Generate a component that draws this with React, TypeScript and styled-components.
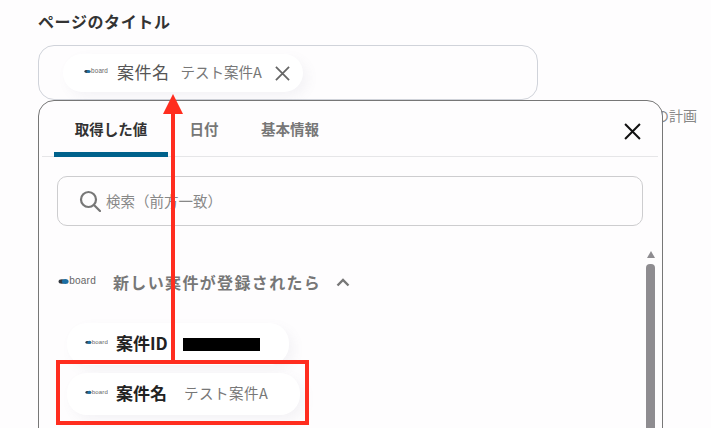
import React from "react";
import styled, { createGlobalStyle } from "styled-components";

const GlobalStyle = createGlobalStyle`
  html, body {
    margin: 0;
    padding: 0;
    background: #fefdfe;
    overflow: hidden;
  }
`;

const Page = styled.div`
  position: relative;
  width: 711px;
  height: 428px;
  overflow: hidden;
  padding: 11px 0 0 38px;
  box-sizing: border-box;
  font-family: "Noto Sans CJK JP", "Noto Sans", sans-serif;
  background: #fefdfe;
`;

const Heading = styled.div`
  font-size: 16px;
  line-height: 20px;
  font-weight: 700;
  color: #333;
  letter-spacing: 0.6px;
  margin-bottom: 14px;
`;

const Field = styled.div`
  width: 500px;
  height: 55px;
  box-sizing: border-box;
  border: 1px solid #d0d3da;
  border-radius: 16px;
  padding: 8px 0 0 24px;
`;

const Pill = styled.div<{ $width: number; $height: number }>`
  display: flex;
  align-items: center;
  width: ${(p) => p.$width}px;
  height: ${(p) => p.$height}px;
  box-sizing: border-box;
  border-radius: 20px;
  background: #fff;
  box-shadow: 5px 5px 12px rgba(120, 110, 140, 0.07);
`;

const FieldPill = styled(Pill)`
  padding: 0 0 3px 21px;
`;

const ListPill = styled(Pill)`
  padding: 0 0 4px 18px;
`;

const LogoWrap = styled.span<{ $width: number }>`
  display: inline-flex;
  align-items: center;
  flex: none;
  width: ${(p) => p.$width}px;
`;

const ChipName = styled.span`
  font-size: 17px;
  color: #555;
  margin-left: 9px;
  letter-spacing: 0.5px;
`;

const ChipValue = styled.span`
  font-size: 14.5px;
  color: #777;
  margin-left: 11px;
`;

const Remove = styled.span`
  display: inline-flex;
  margin: 3px 0 0 13px;
  color: #666;
`;

const Panel = styled.div`
  position: relative;
  z-index: 1;
  width: 625px;
  height: 360px;
  box-sizing: border-box;
  border: 1px solid #777;
  border-radius: 16px;
  background: #fefdfe;
`;

const TabBar = styled.div`
  display: flex;
  align-items: flex-end;
  height: 55px;
  margin: 0 4px 0 3px;
  padding-left: 12px;
  border-bottom: 1px solid #e6e6e8;
`;

const Tab = styled.div<{ $active?: boolean; $width: number }>`
  width: ${(p) => p.$width}px;
  height: 100%;
  box-sizing: border-box;
  display: flex;
  align-items: center;
  justify-content: center;
  font-size: 14.5px;
  font-weight: 700;
  color: ${(p) => (p.$active ? "#333" : "#777")};
  border-bottom: ${(p) => (p.$active ? "5px solid #00628c" : "5px solid transparent")};
  border-radius: 6px 6px 0 0;
  margin-bottom: -1px;
  padding-top: 3px;
`;

const TabSpacer = styled.div`
  flex: 1;
`;

const CloseButton = styled.span`
  display: inline-flex;
  align-self: center;
  margin: 5px 17px 0 0;
  color: #111;
`;

const Body = styled.div`
  display: flex;
  flex-direction: column;
  padding: 19px 7px 0 18px;
`;

const SearchBox = styled.div`
  display: flex;
  align-items: center;
  width: 586px;
  height: 50px;
  box-sizing: border-box;
  border: 1px solid #cdcdcf;
  border-radius: 10px;
  padding-left: 21px;
  color: #777;
`;

const SearchText = styled.span`
  font-size: 14.5px;
  color: #888;
  margin: -2px 0 0 5px;
`;

const ContentRow = styled.div`
  display: flex;
  justify-content: space-between;
  margin-top: 25px;
`;

const Tree = styled.div`
  display: flex;
  flex-direction: column;
  padding-top: 15px;
`;

const SectionHead = styled.div`
  display: flex;
  align-items: center;
  height: 32px;
  padding-left: 1px;
`;

const SectionTitle = styled.span`
  font-size: 16px;
  font-weight: 700;
  color: #777;
  letter-spacing: 1.35px;
  margin-left: 17px;
`;

const Chevron = styled.span`
  display: inline-flex;
  margin-left: 15px;
  color: #777;
`;

const Items = styled.div`
  display: flex;
  flex-direction: column;
  gap: 8px;
  margin: 25px 0 0 10px;
`;

const ItemName = styled.span`
  font-size: 17px;
  font-weight: 700;
  color: #222;
  margin-left: 8px;
`;

const ItemValue = styled.span`
  font-size: 14.5px;
  color: #777;
  margin-left: 17px;
  letter-spacing: 0.5px;
`;

const Redacted = styled.span`
  width: 77px;
  height: 13px;
  background: #000;
  margin: 4px 0 0 15px;
`;

const Scrollbar = styled.div`
  display: flex;
  flex-direction: column;
  align-items: center;
  width: 9px;
  gap: 6px;
`;

const ScrollArrow = styled.span`
  width: 0;
  height: 0;
  border-left: 4.5px solid transparent;
  border-right: 4.5px solid transparent;
  border-bottom: 7px solid #8e8c90;
`;

const ScrollThumb = styled.span`
  width: 9px;
  height: 200px;
  background: #8e8c90;
  border-radius: 4px 4px 0 0;
`;

/* peeks out from behind the panel */
const BehindText = styled.span`
  position: absolute;
  left: 655px;
  top: 106px;
  font-size: 14px;
  line-height: 18px;
  color: #888;
`;

const HighlightBox = styled.div`
  position: absolute;
  z-index: 2;
  left: 56px;
  top: 360px;
  width: 253px;
  height: 65px;
  box-sizing: border-box;
  border: 4px solid #ff2d1f;
`;

const ArrowOverlay = styled.svg`
  position: absolute;
  z-index: 2;
  left: 163px;
  top: 94px;
`;

const BoardLogo = ({ width }: { width: number }) => (
  <svg width={width} height={width / 3.4} viewBox="0 0 68 20">
    <ellipse cx="7" cy="10" rx="6" ry="4" fill="#33383f" />
    <ellipse cx="13" cy="10" rx="6" ry="4.5" fill="#1c6ea4" />
    <text x="20" y="15" fontFamily="Liberation Sans, sans-serif" fontSize="18" fill="#666" letterSpacing="0.4">
      board
    </text>
  </svg>
);

const Cross = ({ size, weight }: { size: number; weight: number }) => (
  <svg width={size} height={size} viewBox="0 0 16 16" fill="none" stroke="currentColor" strokeWidth={weight}>
    <path d="M1 1 15 15M15 1 1 15" />
  </svg>
);

export default function App() {
  return (
    <Page>
      <GlobalStyle />
      <Heading>ページのタイトル</Heading>
      <Field>
        <FieldPill $width={240} $height={38}>
          <LogoWrap $width={24}>
            <BoardLogo width={24} />
          </LogoWrap>
          <ChipName>案件名</ChipName>
          <ChipValue>テスト案件A</ChipValue>
          <Remove>
            <Cross size={15} weight={1.9} />
          </Remove>
        </FieldPill>
      </Field>
      <BehindText>の計画</BehindText>
      <Panel>
        <TabBar>
          <Tab $active $width={114}>取得した値</Tab>
          <Tab $width={72}>日付</Tab>
          <Tab $width={100}>基本情報</Tab>
          <TabSpacer />
          <CloseButton>
            <Cross size={17} weight={1.9} />
          </CloseButton>
        </TabBar>
        <Body>
          <SearchBox>
            <svg width="22" height="22" viewBox="0 0 22 22" fill="none" stroke="#777" strokeWidth="2.2">
              <circle cx="9.5" cy="9.5" r="7.5" />
              <path d="M15 15l6 6" strokeLinecap="round" />
            </svg>
            <SearchText>検索（前方一致）</SearchText>
          </SearchBox>
          <ContentRow>
            <Tree>
              <SectionHead>
                <LogoWrap $width={38}>
                  <BoardLogo width={38} />
                </LogoWrap>
                <SectionTitle>新しい案件が登録されたら</SectionTitle>
                <Chevron>
                  <svg width="14" height="9" viewBox="0 0 14 9" fill="none" stroke="currentColor" strokeWidth="2.4">
                    <path d="M1.5 7.5 7 2l5.5 5.5" />
                  </svg>
                </Chevron>
              </SectionHead>
              <Items>
                <ListPill $width={222} $height={42}>
                  <LogoWrap $width={23}>
                    <BoardLogo width={23} />
                  </LogoWrap>
                  <ItemName>案件ID</ItemName>
                  <Redacted />
                </ListPill>
                <ListPill $width={233} $height={42}>
                  <LogoWrap $width={23}>
                    <BoardLogo width={23} />
                  </LogoWrap>
                  <ItemName>案件名</ItemName>
                  <ItemValue>テスト案件A</ItemValue>
                </ListPill>
              </Items>
            </Tree>
            <Scrollbar>
              <ScrollArrow />
              <ScrollThumb />
            </Scrollbar>
          </ContentRow>
        </Body>
      </Panel>
      <HighlightBox />
      <ArrowOverlay width="20" height="267" viewBox="0 0 20 267">
        <path d="M10 0 20 20H12V267H8V20H0Z" fill="#ff2d1f" />
      </ArrowOverlay>
    </Page>
  );
}
